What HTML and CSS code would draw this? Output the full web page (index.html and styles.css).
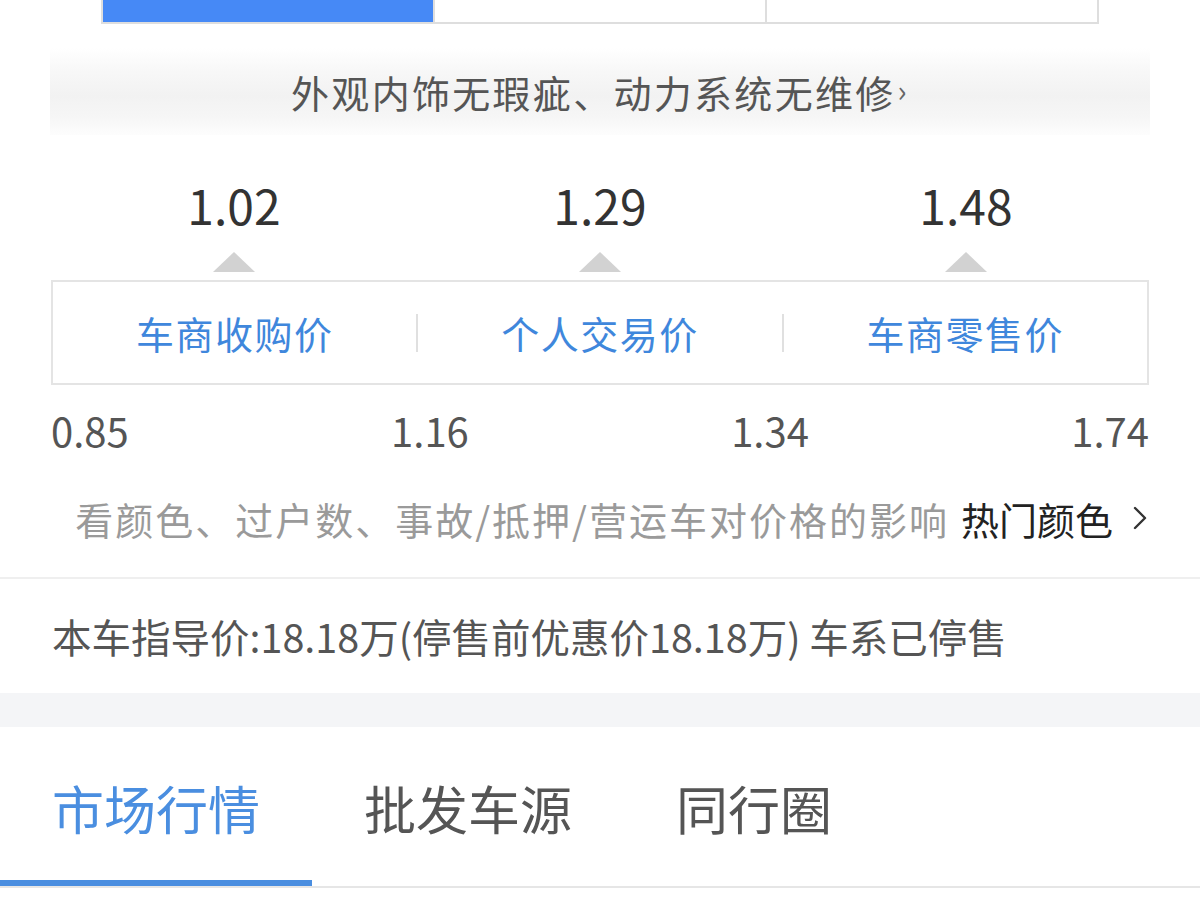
FILE: index.html
```html
<!DOCTYPE html>
<html lang="zh-CN">
<head>
<meta charset="utf-8">
<title>车辆估价</title>
<link rel="stylesheet" href="styles.css">
</head>
<body>
<div class="page">
  <section class="valuation">
    <div class="progress">
      <div class="seg seg-active"></div>
      <div class="seg"></div>
      <div class="seg"></div>
    </div>

    <div class="condition">外观内饰无瑕疵、动力系统无维修<span class="cond-arrow">›</span></div>

    <div class="prices">
      <div class="price-col"><span class="price-value">1.02</span><span class="tri"></span></div>
      <div class="price-col"><span class="price-value">1.29</span><span class="tri"></span></div>
      <div class="price-col"><span class="price-value">1.48</span><span class="tri"></span></div>
    </div>

    <div class="labels">
      <div class="label">车商收购价</div>
      <div class="label-sep"></div>
      <div class="label">个人交易价</div>
      <div class="label-sep"></div>
      <div class="label">车商零售价</div>
    </div>

    <div class="scale">
      <span>0.85</span>
      <span>1.16</span>
      <span>1.34</span>
      <span>1.74</span>
    </div>

    <div class="hint">
      <span class="hint-text">看颜色、过户数、事故/抵押/营运车对价格的影响</span>
      <span class="hint-link">热门颜色</span>
      <svg class="chev" width="14" height="24" viewBox="0 0 14 24"><path d="M2 2 L12 12 L2 22" fill="none" stroke="#333" stroke-width="2.4" stroke-linecap="round" stroke-linejoin="round"/></svg>
    </div>
  </section>

  <div class="divider"></div>

  <div class="guide">本车指导价:18.18万(停售前优惠价18.18万) 车系已停售</div>

  <div class="band"></div>

  <nav class="tabs">
    <div class="tab tab-active">市场行情</div>
    <div class="tab">批发车源</div>
    <div class="tab">同行圈</div>
  </nav>
</div>
</body>
</html>
```

FILE: styles.css
```css
* {
  box-sizing: border-box;
}

html, body {
  margin: 0;
  padding: 0;
  background: #ffffff;
}

body {
  font-family: "Noto Sans CJK SC", "Noto Sans", sans-serif;
  color: #333333;
  width: 1200px;
  overflow: hidden;
}

.page {
  width: 1200px;
}

.valuation {
  padding: 0 51px;
}

.progress {
  display: flex;
  height: 24px;
  margin: 0 50px;
  border: 2px solid #dedede;
  border-top: none;
}

.seg {
  flex: 1;
  background: #ffffff;
  border-left: 2px solid #dedede;
}

.seg:first-child {
  border-left: none;
}

.seg-active {
  background: #4689f6;
}

.condition {
  margin: 24px -1px 0;
  height: 87px;
  display: flex;
  align-items: center;
  justify-content: center;
  font-size: 38px;
  letter-spacing: 2.3px;
  color: #555555;
  background: linear-gradient(#ffffff 0%, #f7f7f7 28%, #f2f2f2 55%, #f6f6f6 80%, #fdfdfd 100%);
}

.cond-arrow {
  font-size: 30px;
  color: #666666;
  margin-left: 2px;
  position: relative;
  top: -3px;
}

.prices {
  display: grid;
  grid-template-columns: 1fr 1fr 1fr;
  padding-top: 39px;
}

.price-col {
  display: flex;
  flex-direction: column;
  align-items: center;
}

.price-value {
  font-size: 48px;
  line-height: 60px;
  color: #333333;
}

.tri {
  width: 0;
  height: 0;
  margin-top: 18px;
  margin-bottom: 8px;
  border-left: 21px solid transparent;
  border-right: 21px solid transparent;
  border-bottom: 20px solid #d2d2d2;
}

.labels {
  display: grid;
  grid-template-columns: 1fr 2px 1fr 2px 1fr;
  align-items: center;
  height: 105px;
  border: 2px solid #e4e4e4;
}

.label {
  text-align: center;
  font-size: 38px;
  color: #3f87dc;
  letter-spacing: 1.5px;
}

.label-sep {
  width: 2px;
  height: 38px;
  background: #e0e0e0;
}

.scale {
  display: flex;
  justify-content: space-between;
  margin-top: 17px;
  font-size: 40px;
  line-height: 56px;
  color: #555555;
}

.hint {
  display: flex;
  align-items: center;
  justify-content: flex-end;
  margin-top: 32px;
  height: 56px;
  font-size: 38px;
}

.hint-text {
  color: #9a9a9a;
  letter-spacing: 2px;
}

.hint-link {
  color: #222222;
  margin-left: 12px;
}

.chev {
  margin-left: 20px;
  margin-right: 2px;
}

.divider {
  margin-top: 31px;
  height: 2px;
  background: #efefef;
}

.guide {
  margin-top: 29px;
  padding: 0 52px;
  font-size: 39.5px;
  line-height: 56px;
  color: #555555;
}

.band {
  margin-top: 29px;
  height: 34px;
  background: #f4f5f7;
}

.tabs {
  display: flex;
  border-bottom: 2px solid #e6e6e6;
}

.tab {
  padding: 45px 52px 36px;
  font-size: 52px;
  line-height: 72px;
  color: #555555;
  border-bottom: 6px solid transparent;
}

.tab-active {
  color: #4a8ee0;
  border-bottom-color: #4a8ee0;
}
```
